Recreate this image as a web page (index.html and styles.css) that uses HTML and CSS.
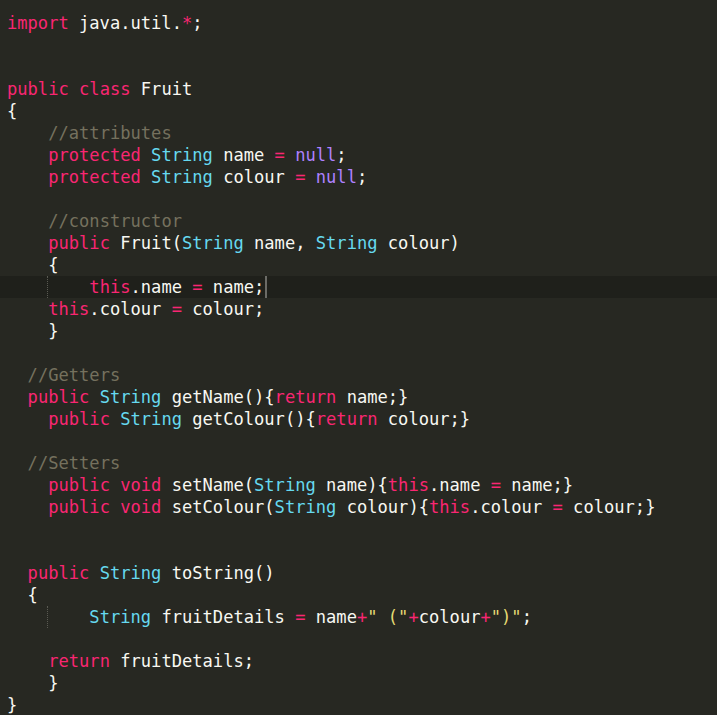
FILE: index.html
```html
<!DOCTYPE html>
<html>
<head>
<meta charset="utf-8">
<link rel="stylesheet" href="styles.css">
</head>
<body>
<div class="editor">
<div class="line"><span class="k">import</span> java.util.<span class="k">*</span>;</div>
<div class="line"> </div>
<div class="line"> </div>
<div class="line"><span class="k">public</span> <span class="k">class</span> Fruit</div>
<div class="line">{</div>
<div class="line">    <span class="c">//attributes</span></div>
<div class="line">    <span class="k">protected</span> <span class="t">String</span> name <span class="k">=</span> <span class="n">null</span>;</div>
<div class="line">    <span class="k">protected</span> <span class="t">String</span> colour <span class="k">=</span> <span class="n">null</span>;</div>
<div class="line"> </div>
<div class="line">    <span class="c">//constructor</span></div>
<div class="line">    <span class="k">public</span> Fruit(<span class="t">String</span> name, <span class="t">String</span> colour)</div>
<div class="line">    {</div>
<div class="line hl">    <span class="guide">    <span class="k">this</span>.name <span class="k">=</span> name;<span class="cursor"></span></span></div>
<div class="line">    <span class="k">this</span>.colour <span class="k">=</span> colour;</div>
<div class="line">    }</div>
<div class="line"> </div>
<div class="line">  <span class="c">//Getters</span></div>
<div class="line">  <span class="k">public</span> <span class="t">String</span> getName(){<span class="k">return</span> name;}</div>
<div class="line">    <span class="k">public</span> <span class="t">String</span> getColour(){<span class="k">return</span> colour;}</div>
<div class="line"> </div>
<div class="line">  <span class="c">//Setters</span></div>
<div class="line">    <span class="k">public</span> <span class="k">void</span> setName(<span class="t">String</span> name){<span class="k">this</span>.name <span class="k">=</span> name;}</div>
<div class="line">    <span class="k">public</span> <span class="k">void</span> setColour(<span class="t">String</span> colour){<span class="k">this</span>.colour <span class="k">=</span> colour;}</div>
<div class="line"> </div>
<div class="line"> </div>
<div class="line">  <span class="k">public</span> <span class="t">String</span> toString()</div>
<div class="line">  {</div>
<div class="line">    <span class="guide">    <span class="t">String</span> fruitDetails <span class="k">=</span> name<span class="k">+</span><span class="s">" ("</span><span class="k">+</span>colour<span class="k">+</span><span class="s">")"</span>;</span></div>
<div class="line"> </div>
<div class="line">    <span class="k">return</span> fruitDetails;</div>
<div class="line">    }</div>
<div class="line">}</div>
</div>
</body>
</html>
```
FILE: styles.css
```css
html, body {
  margin: 0;
  padding: 0;
  background: #272822;
}
.editor {
  width: 717px;
  height: 715px;
  overflow: hidden;
  padding-top: 12px;
  box-sizing: border-box;
  font-family: "DejaVu Sans Mono", "Liberation Mono", monospace;
  font-size: 17.1px;
  color: #f8f8f2;
}
.line {
  height: 22px;
  line-height: 22px;
  padding-left: 7px;
  white-space: pre;
}
.hl {
  background: #1f201b;
}
.k { color: #f92672; }
.t { color: #66d9ef; }
.n { color: #ae81ff; }
.c { color: #75715e; }
.s { color: #e6db74; }
.guide {
  display: inline-block;
  height: 22px;
  border-left: 1px dotted #5a5a52;
  margin-left: -1px;
  vertical-align: top;
}
.cursor {
  display: inline-block;
  width: 2px;
  height: 22px;
  background: #6b6b66;
  vertical-align: top;
  margin-left: 1px;
}
```
